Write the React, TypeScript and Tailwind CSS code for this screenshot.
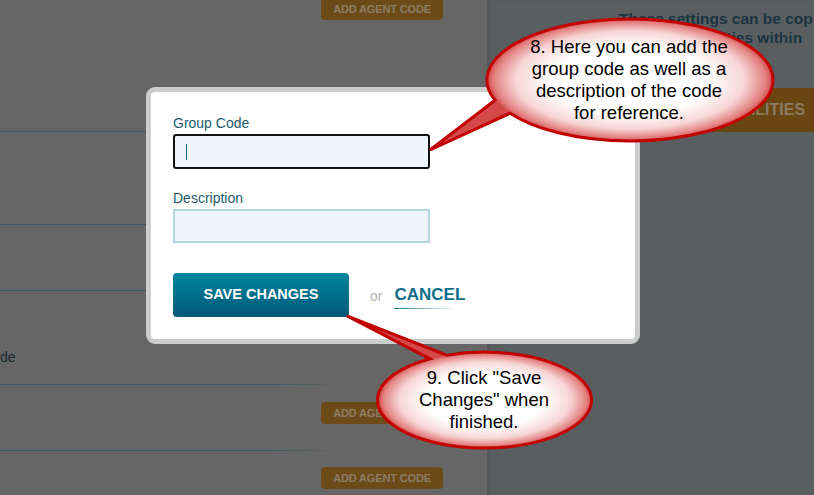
import React from 'react'

function AgentButton({ className = '' }: { className?: string }) {
    return (
        <div className={`ml-[321px] flex h-[22px] w-[122px] items-center justify-center rounded-[4px] bg-[#6c4b19] text-[11px] font-bold tracking-[-0.15px] text-[#8c7b62] ${className}`}>
            ADD AGENT CODE
        </div>
    )
}

function RowLine() {
    return <div className="h-px w-[340px] shrink-0 bg-linear-to-r from-[#3c5963] via-[#3c5963] via-80% to-transparent" />
}

function Callouts() {
    return (
        <svg className="pointer-events-none absolute inset-0" width="814" height="495">
            <defs>
                <radialGradient id="bubble1" gradientUnits="userSpaceOnUse" cx="0" cy="0" r="1" gradientTransform="translate(630 80) scale(143 61)">
                    <stop offset="0" stopColor="#ffffff" />
                    <stop offset="0.55" stopColor="#ffffff" />
                    <stop offset="0.8" stopColor="#f7d6d6" />
                    <stop offset="0.95" stopColor="#e38080" />
                    <stop offset="1" stopColor="#d44848" />
                </radialGradient>
                <radialGradient id="bubble2" gradientUnits="userSpaceOnUse" cx="0" cy="0" r="1" gradientTransform="translate(485 400) scale(107 48)">
                    <stop offset="0" stopColor="#ffffff" />
                    <stop offset="0.55" stopColor="#ffffff" />
                    <stop offset="0.8" stopColor="#f7d6d6" />
                    <stop offset="0.95" stopColor="#e38080" />
                    <stop offset="1" stopColor="#d44848" />
                </radialGradient>
            </defs>
            <path d="M 495.04 100.16 A 143 61 0 1 1 510.07 113.22 L 430 150 Z" fill="url(#bubble1)" stroke="#c20000" strokeWidth="3" />
            <path d="M 430 358.8 A 107 48 0 1 0 446.7 355.2 L 347 316 Z" fill="url(#bubble2)" stroke="#c20000" strokeWidth="3" />
        </svg>
    )
}

export default function App() {
    return (
        <div className="relative flex h-[495px] w-[814px] overflow-hidden font-['Liberation_Sans',Arial,sans-serif]">
            {/* left list, dimmed */}
            <div className="flex w-[487px] shrink-0 flex-col bg-[#666666]">
                <div className="h-[131px] shrink-0">
                    <AgentButton className="-mt-[2px]" />
                </div>
                <RowLine />
                <div className="h-[92px] shrink-0" />
                <RowLine />
                <div className="h-[65px] shrink-0" />
                <RowLine />
                <div className="h-[93px] shrink-0 pt-[58px] text-[14px] leading-[16px] text-[#1c2a30]">de</div>
                <RowLine />
                <div className="h-[65px] shrink-0 pt-[17px]">
                    <AgentButton />
                </div>
                <RowLine />
                <div className="flex-1 pt-[16px]">
                    <AgentButton />
                </div>
            </div>

            {/* right settings panel, dimmed */}
            <div className="flex flex-1 flex-col overflow-hidden bg-[#595f61] shadow-[inset_3px_0_3px_rgba(0,0,0,0.08)]">
                <div className="pl-[132px] pt-[9px] text-[15.5px] font-bold leading-[19px] text-[#1b3440] whitespace-nowrap">
                    <div>These settings can be copied</div>
                    <div className="pl-[10px]">to other facilities within</div>
                </div>
                <div className="ml-[138px] mt-[41px] flex h-[44px] w-[260px] shrink-0 items-center rounded-[4px] bg-[#6a4612] pl-[18px] text-[16px] font-bold text-[#8c7a64] whitespace-nowrap">
                    COPY TO FACILITIES
                </div>
            </div>

            {/* modal */}
            <div className="absolute left-[146px] top-[87px] h-[257px] w-[494px] rounded-[9px] border-[5px] border-[#cccccc] bg-white">
                <div className="flex flex-col pl-[22px] pt-[23px]">
                    <label className="text-[14px] leading-[16px] text-[#1d5a6b]">Group Code</label>
                    <div className="mt-[3px] flex h-[35px] w-[257px] items-center rounded-[3px] border-2 border-[#111111] bg-[#eff5f8] pl-[11px]">
                        <span className="h-[16px] w-px bg-[#1d6a80]" />
                    </div>
                    <label className="mt-[21px] text-[14px] leading-[16px] text-[#1d5a6b]">Description</label>
                    <div className="mt-[3px] h-[34px] w-[257px] border-2 border-[#b5d6de] bg-[#eff5f8]" />
                    <div className="mt-[30px] flex items-center">
                        <button className="flex h-[44px] w-[176px] items-center justify-center rounded-[4px] bg-linear-to-b from-[#03879f] to-[#015877] text-[14.5px] font-bold text-white">
                            SAVE CHANGES
                        </button>
                        <span className="ml-[21px] mt-[2px] text-[14px] text-[#b5b5b5]">or</span>
                        <div className="ml-[12px] mt-[4px] flex flex-col">
                            <span className="text-[17px] font-bold leading-[20px] text-[#0f6e8a]">CANCEL</span>
                            <span className="mt-[3px] h-px w-[64px] bg-linear-to-r from-[#1d7a95] to-transparent" />
                        </div>
                    </div>
                </div>
            </div>

            <Callouts />

            <div className="absolute left-[499px] top-[36px] w-[260px] text-center text-[18.5px] leading-[22px] text-black">
                8. Here you can add the<br />
                group code as well as a<br />
                description of the code<br />
                for reference.
            </div>
            <div className="absolute left-[394px] top-[367px] w-[180px] text-center text-[18.5px] leading-[22px] text-black">
                9. Click "Save<br />
                Changes" when<br />
                finished.
            </div>
        </div>
    )
}
